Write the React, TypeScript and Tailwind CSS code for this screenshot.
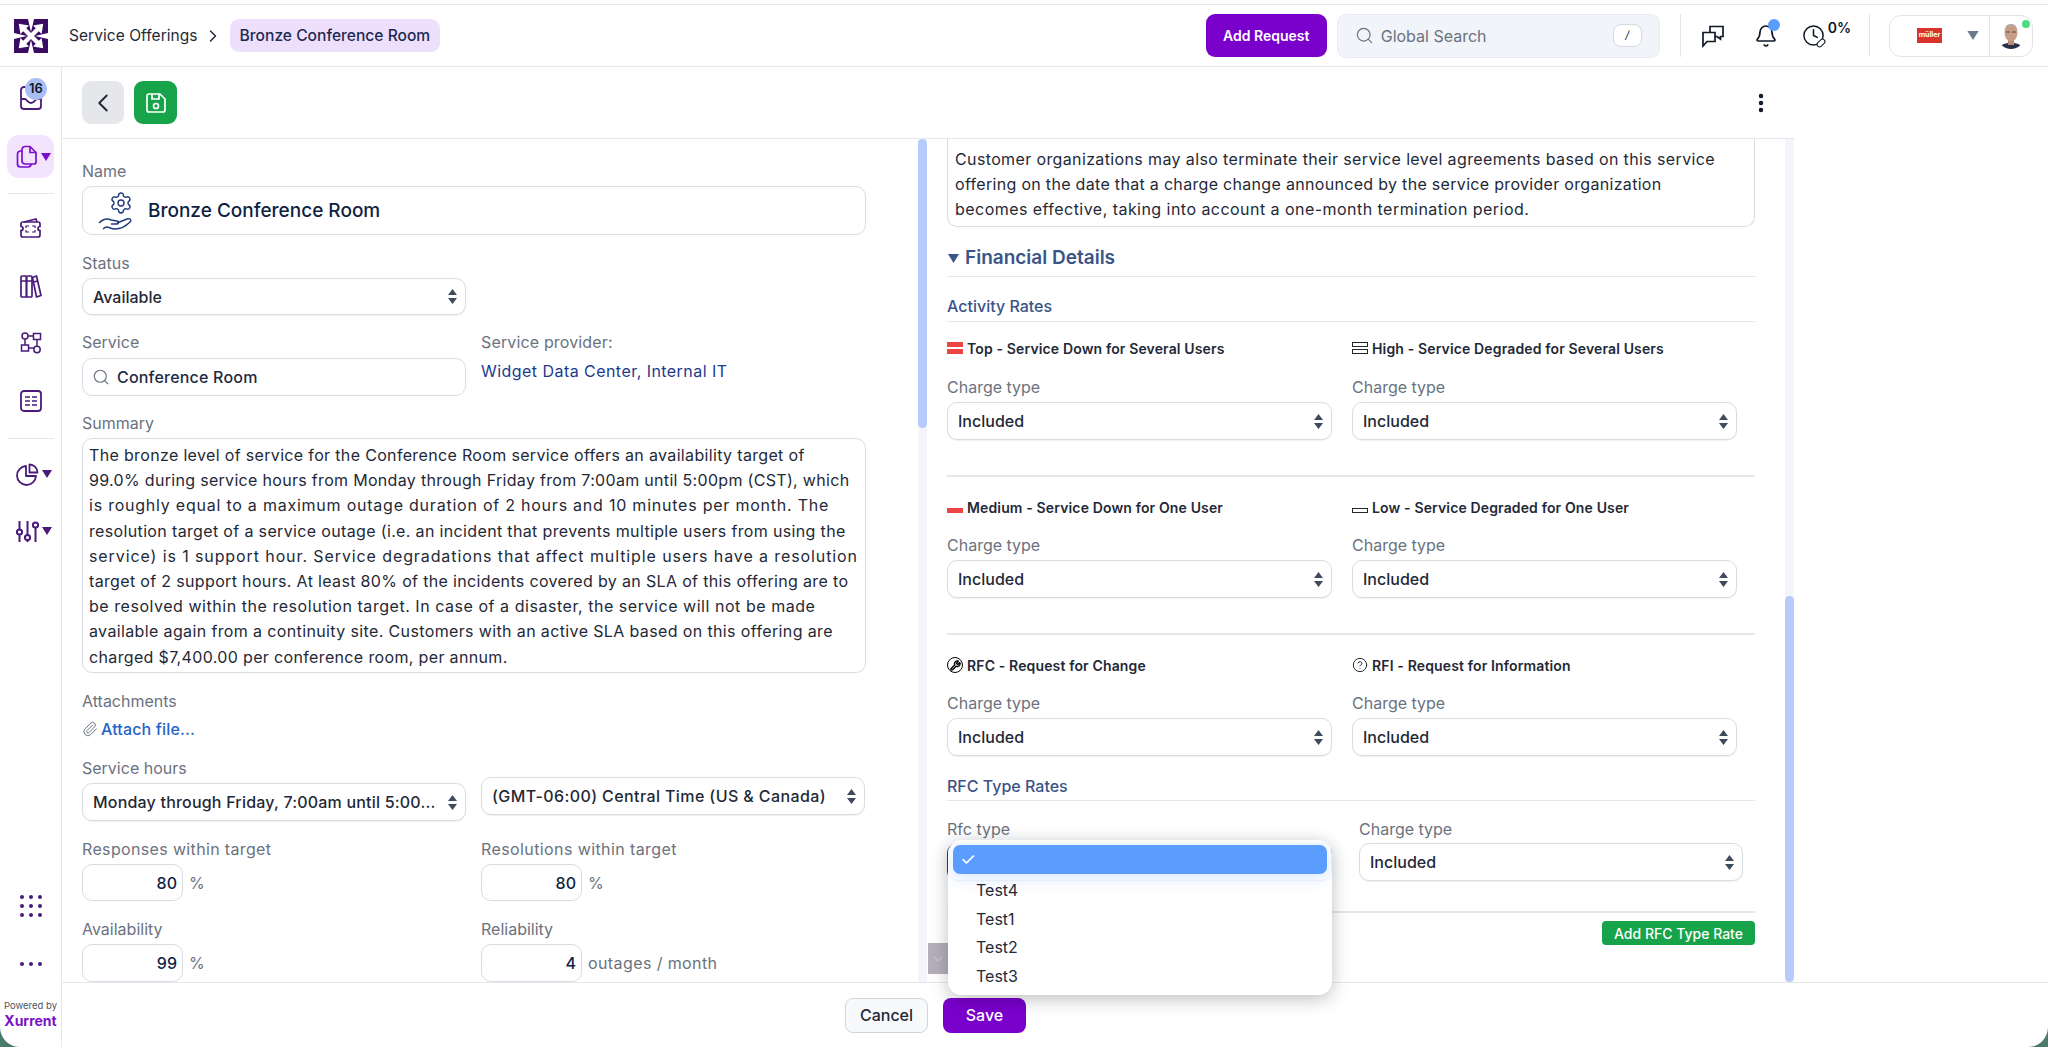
import type { ReactNode } from 'react'
import {
  Bell,
  ChevronDown,
  ChevronLeft,
  ChevronRight,
  CircleHelp,
  Clock,
  EllipsisVertical,
  Paperclip,
  Search,
  Settings,
  Wrench
} from 'lucide-react'

const purple = 'text-[#4a1a7a]'

function Logo(): React.JSX.Element {
  return (
    <svg width="34" height="34" viewBox="0 0 100 100" className="mx-[14px] shrink-0">
      <rect width="100" height="100" fill="#3a0c64" />
      <path fill="#fff" d="M41 0h18l-9 38zM41 100h18l-9-38zM0 41v18l38-9zM100 41v18l-38-9z" />
      <path stroke="#fff" strokeWidth="13" d="M28 28 72 72M72 28 28 72" />
      <path fill="#fff" d="M14 14l30 5-25 25zM86 14l-30 5 25 25zM14 86l30-5-25-25zM86 86l-30-5 25-25z" />
    </svg>
  )
}

function Caret({ className = '' }: { className?: string }): React.JSX.Element {
  return (
    <svg width="10" height="8" viewBox="0 0 10 8" className={className}>
      <path d="M0 0h10L5 8z" fill="currentColor" />
    </svg>
  )
}

function SideCell({ mt, children }: { mt: string; children: ReactNode }): React.JSX.Element {
  return <div className={`flex h-9 items-center justify-center ${mt} ${purple}`}>{children}</div>
}

function Sidebar(): React.JSX.Element {
  return (
    <aside className="flex w-[62px] shrink-0 flex-col border-r border-[#e5e7eb]">
      <div className="relative mt-2 flex h-11 items-center justify-center">
        <svg width="24" height="25" viewBox="0 0 24 25" fill="none" stroke="#4a1a7a" strokeWidth="1.8">
          <path d="M8 2H5a3 3 0 0 0-3 3v16a3 3 0 0 0 3 3h14a3 3 0 0 0 3-3V10" />
          <path d="M2 14h4c2 0 2 4 6 4s4-4 6-4h4" />
        </svg>
        <span className="absolute left-[25px] top-[3px] flex h-[22px] w-[22px] items-center justify-center rounded-full bg-[#a9bff3] text-[13px] font-semibold text-[#111827]">
          16
        </span>
      </div>
      <div className="mx-[7px] mt-4 flex h-[43px] items-center justify-center gap-[3px] rounded-[12px] bg-[#f3e3fd] pl-[6px] text-[#7a10c8]">
        <svg width="22" height="24" viewBox="0 0 22 24" fill="none" stroke="currentColor" strokeWidth="1.7">
          <path d="M9 1.500h5l6 6V17a2 2 0 0 1-2 2H9a3 3 0 0 1-3-3V4.500a3 3 0 0 1 3-3z" />
          <path d="M14 1.500V7.500h6" />
          <path d="M6 6H4.500a3 3 0 0 0-3 3v10a3 3 0 0 0 3 3H12a3 3 0 0 0 3-3" />
        </svg>
        <Caret />
      </div>
      <div className="mx-[7px] mt-[15px] h-px bg-[#e5e7eb]" />
      <SideCell mt="mt-4">
        <svg width="23" height="22" viewBox="0 0 23 22" fill="none" stroke="currentColor" strokeWidth="1.7">
          <path d="M4 5h15a2 2 0 0 1 2 2v2.500a2 2 0 0 0 0 4V18a2 2 0 0 1-2 2H4a2 2 0 0 1-2-2v-4.500a2 2 0 0 0 0-4V7a2 2 0 0 1 2-2z" />
          <path d="M5 5l12-3 1 3" />
          <path strokeWidth="1.2" d="M7 11V9h3M16 11V9h-3M7 13v2h3M16 13v2h-3" />
        </svg>
      </SideCell>
      <SideCell mt="mt-[22px]">
        <svg width="22" height="25" viewBox="0 0 22 25" fill="none" stroke="currentColor" strokeWidth="1.700" strokeLinejoin="round">
          <rect x="1" y="2" width="5.500" height="21" rx="1" />
          <rect x="6.500" y="2" width="5.500" height="21" rx="1" />
          <path d="M12.500 3.500 16.500 2 21 21.500l-4.500 1.500z" />
          <path d="M1 7h5.500M6.500 7H12M13.500 8l4-1" strokeWidth="1.300" />
        </svg>
      </SideCell>
      <SideCell mt="mt-[21px]">
        <svg width="22" height="22" viewBox="0 0 22 22" fill="none" stroke="currentColor" strokeWidth="1.500">
          <circle cx="5" cy="4" r="3" />
          <path d="M5 7v6M1.500 13h7v6h-7zM8.500 16H14M13.500 1.500h7v6h-7zM8 4h5.500M17 8v6" />
          <circle cx="17" cy="17.500" r="3.200" />
        </svg>
      </SideCell>
      <SideCell mt="mt-[22px]">
        <svg width="22" height="22" viewBox="0 0 22 22" fill="none" stroke="currentColor" strokeWidth="1.8">
          <rect x="1" y="1" width="20" height="20" rx="3" />
          <path d="M5 7h5M12 7h5M5 11h5M12 11h5M5 15h5M12 15h5" strokeWidth="1.500" />
        </svg>
      </SideCell>
      <div className="mx-[7px] mt-[19px] h-px bg-[#e5e7eb]" />
      <SideCell mt="mt-[17px]">
        <span className="flex items-center gap-[3px] pl-[6px]">
          <svg width="23" height="23" viewBox="0 0 23 23" fill="none" stroke="currentColor" strokeWidth="1.800" strokeLinejoin="round">
            <path d="M10 3a9.500 9.500 0 1 0 10 10H10z" />
            <path d="M13.500 1.500a8 8 0 0 1 8 8h-8z" />
          </svg>
          <Caret />
        </span>
      </SideCell>
      <SideCell mt="mt-[21px]">
        <span className="flex items-center gap-[3px] pl-[6px]">
          <svg width="23" height="23" viewBox="0 0 23 23" fill="none" stroke="currentColor" strokeWidth="2">
            <path d="M3.500 1v8M3.500 15v7M11.500 1v14M11.500 20v2M19.500 8v14" />
            <circle cx="3.500" cy="12" r="2.600" />
            <circle cx="11.500" cy="17.500" r="2.600" />
            <circle cx="19.500" cy="5" r="2.600" />
          </svg>
          <Caret />
        </span>
      </SideCell>
      <div className="flex-1" />
      <SideCell mt="">
        <span className="grid grid-cols-3 gap-x-[5px] gap-y-[5px]">
          {[0, 1, 2, 3, 4, 5, 6, 7, 8].map((i) => (
            <span key={i} className="h-[4px] w-[4px] rounded-full bg-[#4a1a7a]" />
          ))}
        </span>
      </SideCell>
      <SideCell mt="mt-[22px]">
        <span className="flex gap-[5px]">
          {[0, 1, 2].map((i) => (
            <span key={i} className="h-[4px] w-[4px] rounded-full bg-[#4a1a7a]" />
          ))}
        </span>
      </SideCell>
      <div className="mb-[17px] mt-[17px] flex flex-col items-center">
        <span className="text-[9.500px] leading-[13px] text-[#4b5563]">Powered by</span>
        <span className="text-[14px] font-bold leading-[18px] text-[#7a10c8]">Xurrent</span>
      </div>
    </aside>
  )
}

function Avatar(): React.JSX.Element {
  return (
    <svg width="26" height="28" viewBox="0 0 26 28" className="shrink-0">
      <clipPath id="face">
        <circle cx="13" cy="14" r="13" />
      </clipPath>
      <g clipPath="url(#face)">
        <rect width="26" height="28" fill="#fff" />
        <path d="M1 28c0-5 5-7 12-7s12 2 12 7z" fill="#27324a" />
        <rect x="10" y="16" width="6" height="7" fill="#b98a74" />
        <ellipse cx="13" cy="11" rx="6.500" ry="8.500" fill="#c79d88" />
        <path d="M6.500 9C7 3 10 2 13 2s6 1 6.500 7C18 5 16 4.500 13 4.500S8 5 6.500 9z" fill="#b7aaa3" />
        <path d="M8 10h4M14 10h4" stroke="#5b4a44" strokeWidth="1" />
      </g>
    </svg>
  )
}

function Header(): React.JSX.Element {
  return (
    <header className="flex h-[62px] shrink-0 items-center border-b border-[#e5e7eb]">
      <Logo />
      <span className="ml-[7px] text-[15.500px] tracking-[0.05px] text-[#1f2937]">Service Offerings</span>
      <ChevronRight size={20} strokeWidth={1.7} className="ml-[5px] text-[#1f2937]" />
      <span className="ml-[7px] flex h-[33px] items-center rounded-[9px] bg-[#eedffc] px-[10px] text-[15.600px] font-medium text-[#1e2a52]">
        Bronze Conference Room
      </span>
      <div className="flex-1" />
      <button className="h-[43px] w-[121px] rounded-[9px] bg-[#7a00cc] text-[14px] font-semibold text-white">
        Add Request
      </button>
      <div className="ml-[10px] flex h-[44px] w-[323px] items-center rounded-[9px] border border-[#e8ecf2] bg-[#f1f4f9] px-[17px]">
        <Search size={19} strokeWidth={1.5} className="text-[#6b7280]" />
        <span className="ml-[7px] flex-1 text-[16px] text-[#6b7280]">Global Search</span>
        <span className="flex h-[23px] w-[29px] items-center justify-center rounded-[8px] border border-[#d5d9e0] bg-white text-[11px] italic text-[#111827]">
          /
        </span>
      </div>
      <div className="ml-[20px] h-[43px] w-px bg-[#e5e7eb]" />
      <svg width="24" height="24" viewBox="0 0 24 24" fill="none" stroke="#111827" strokeWidth="1.7" className="ml-[20px]">
        <path d="M9 8V2.500h13v10h-2.500V15L16 12.500h-2" />
        <path d="M2 8.500h12v9H6L2 22z" />
      </svg>
      <div className="relative ml-[29px]">
        <Bell size={24} strokeWidth={1.7} className="text-[#111827]" />
        <span className="absolute -right-[2px] -top-[5px] h-[12px] w-[12px] rounded-full bg-[#5b9dff]" />
      </div>
      <div className="ml-[24px] flex items-start">
        <div className="relative">
          <Clock size={23} strokeWidth={1.6} className="text-[#111827]" />
          <span className="absolute -right-[1px] bottom-[1px] h-[6px] w-[10px] -rotate-45 rounded-full border border-[#111827] bg-white" />
        </div>
        <span className="ml-[3px] -mt-[7px] text-[14px] font-semibold text-[#111827]">0%</span>
      </div>
      <div className="ml-[18px] h-[43px] w-px bg-[#e5e7eb]" />
      <div className="ml-[19px] mr-[15px] flex h-[42px] w-[144px] items-center rounded-[12px] border border-[#dfe3e8]">
        <span className="ml-[27px] flex h-[15px] w-[25px] items-center justify-center bg-[#d9342b] text-[7px] font-bold text-white">
          müller
        </span>
        <Caret className="ml-[25px] h-[9px] w-[12px] text-[#6b7a8d]" />
        <div className="relative ml-[10px] flex h-full flex-1 items-center justify-center border-l border-[#dfe3e8]">
          <Avatar />
          <span className="absolute right-[2px] top-[4px] h-[8px] w-[8px] rounded-full bg-[#4ade80]" />
        </div>
      </div>
    </header>
  )
}

function Label({ children, className = '' }: { children: ReactNode; className?: string }): React.JSX.Element {
  return <div className={`text-[16px] leading-6 text-[#6b7280] ${className}`}>{children}</div>
}

function Arrows(): React.JSX.Element {
  return (
    <svg width="9" height="15" viewBox="0 0 9 15" className="shrink-0 text-[#3f4a5c]">
      <path d="M4.500 0 9 6H0zM0 9h9l-4.500 6z" fill="currentColor" />
    </svg>
  )
}

function Select({
  value,
  className = 'h-[38px]',
  textClass = ''
}: {
  value: string
  className?: string
  textClass?: string
}): React.JSX.Element {
  return (
    <div className={`flex items-center justify-between rounded-[10px] border border-[#d8dde5] bg-white pl-[10px] pr-[8px] shadow-[0_1px_1px_rgba(0,0,0,0.06)] ${className}`}>
      <span className={`truncate text-[16px] font-medium text-[#1f2937] ${textClass}`}>{value}</span>
      <Arrows />
    </div>
  )
}

function NumberInput({
  value,
  unit,
  className = 'mt-[3px] h-[37px]'
}: {
  value: string
  unit: string
  className?: string
}): React.JSX.Element {
  return (
    <div className={`flex items-center ${className}`}>
      <div className="flex h-full w-[101px] items-center justify-end rounded-[10px] border border-[#d8dde5] pr-[5px] text-[16px] font-medium text-[#0f1f44]">
        {value}
      </div>
      <span className="ml-[6px] text-[16px] tracking-[0.4px] text-[#6b7280]">{unit}</span>
    </div>
  )
}

// the reference breaks these texts at fixed points, so they are kept line by line
const summaryLines = [
  { text: 'The bronze level of service for the Conference Room service offers an availability target of', fit: 'tracking-[0.34px]' },
  { text: '99.0% during service hours from Monday through Friday from 7:00am until 5:00pm (CST), which', fit: 'tracking-[0.31px]' },
  { text: 'is roughly equal to a maximum outage duration of 2 hours and 10 minutes per month. The', fit: 'tracking-[0.77px]' },
  { text: 'resolution target of a service outage (i.e. an incident that prevents multiple users from using the', fit: 'tracking-[0.35px]' },
  { text: 'service) is 1 support hour. Service degradations that affect multiple users have a resolution', fit: 'tracking-[0.9px]' },
  { text: 'target of 2 support hours. At least 80% of the incidents covered by an SLA of this offering are to', fit: 'tracking-[0.34px]' },
  { text: 'be resolved within the resolution target. In case of a disaster, the service will not be made', fit: 'tracking-[0.54px]' },
  { text: 'available again from a continuity site. Customers with an active SLA based on this offering are', fit: 'tracking-[0.37px]' },
  { text: 'charged $7,400.00 per conference room, per annum.', fit: 'tracking-[0.35px]' }
]

const termsLines = [
  { text: 'Customer organizations may also terminate their service level agreements based on this service', fit: 'tracking-[0.37px]' },
  { text: 'offering on the date that a charge change announced by the service provider organization', fit: 'tracking-[0.31px]' },
  { text: 'becomes effective, taking into account a one-month termination period.', fit: 'tracking-[0.46px]' }
]

function TextLines({ lines }: { lines: { text: string; fit: string }[] }): React.JSX.Element {
  return (
    <>
      {lines.map((line) => (
        <div key={line.text} className={`whitespace-nowrap ${line.fit}`}>
          {line.text}
        </div>
      ))}
    </>
  )
}

function LeftForm(): React.JSX.Element {
  return (
    <div className="h-full w-[856px] shrink-0 overflow-hidden pl-5 pr-[52px] pt-5">
      <Label>Name</Label>
      <div className="mt-[3px] flex h-[49px] items-center rounded-[10px] border border-[#d8dde5] pl-[15px]">
        <div className="flex w-[38px] flex-col items-center text-[#1e3a7a]">
          <Settings size={24} strokeWidth={1.4} className="ml-[8px]" />
          <svg width="38" height="17" viewBox="0 0 38 17" fill="none" stroke="currentColor" strokeWidth="1.4" className="-mt-[2px]">
            <path d="M1 10c4-4 8-5 12-3l6 1c2 0 2 3 0 3h-6M19 10l10-4c3-1 5 1 3 3-4 4-9 7-15 7-4 0-6-2-8-2s-3 1-4 2" />
          </svg>
        </div>
        <span className="ml-[12px] mt-[1px] text-[19px] font-medium text-[#0f1f44]">Bronze Conference Room</span>
      </div>
      <Label className="mt-4">Status</Label>
      <Select value="Available" className="mt-[3px] h-[37px] w-[384px]" />
      <div className="mt-[15px] grid grid-cols-[399px_1fr]">
        <div>
          <Label>Service</Label>
          <div className="mt-1 flex h-[38px] w-[384px] items-center rounded-[10px] border border-[#d8dde5] pl-[9px]">
            <Search size={18} strokeWidth={1.5} className="text-[#6b7280]" />
            <span className="ml-[7px] text-[16px] font-medium tracking-[0.2px] text-[#1e2a44]">Conference Room</span>
          </div>
        </div>
        <div>
          <Label className="tracking-[0.15px]">Service provider:</Label>
          <div className="mt-[5px] text-[16px] leading-6 tracking-[0.45px] text-[#1e3a8a]">Widget Data Center, Internal IT</div>
        </div>
      </div>
      <Label className="mt-[15px]">Summary</Label>
      <div className="mt-[3px] h-[235px] rounded-[10px] border border-[#d8dde5] px-[6px] pb-[2px] pt-[4px] text-[16px] leading-[25.200px] text-[#1f2937]">
        <TextLines lines={summaryLines} />
      </div>
      <Label className="mt-4">Attachments</Label>
      <div className="mt-1 flex items-center text-[16px] font-medium leading-6 tracking-[0.15px] text-[#2563c9]">
        <Paperclip size={16} strokeWidth={1.5} className="mr-[3px] text-[#6b7280]" />
        Attach file...
      </div>
      <div className="mt-[15px] grid grid-cols-[399px_1fr]">
        <div>
          <Label>Service hours</Label>
          <Select
            value="Monday through Friday, 7:00am until 5:00..."
            className="mt-[3px] h-[38px] w-[384px]"
            textClass="tracking-[0.2px]"
          />
        </div>
        <Select
          value="(GMT-06:00) Central Time (US & Canada)"
          className="mt-[21px] h-[38px] w-[384px]"
          textClass="tracking-[0.4px]"
        />
      </div>
      <div className="mt-4 grid grid-cols-[399px_1fr]">
        <div>
          <Label className="tracking-[0.35px]">Responses within target</Label>
          <NumberInput value="80" unit="%" />
        </div>
        <div>
          <Label className="tracking-[0.4px]">Resolutions within target</Label>
          <NumberInput value="80" unit="%" />
        </div>
      </div>
      <div className="mt-4 grid grid-cols-[399px_1fr]">
        <div>
          <Label>Availability</Label>
          <NumberInput value="99" unit="%" className="mt-[3px] h-[38px]" />
        </div>
        <div>
          <Label>Reliability</Label>
          <NumberInput value="4" unit="outages / month" className="mt-[3px] h-[38px]" />
        </div>
      </div>
    </div>
  )
}

function Bars({ kind }: { kind: 'top' | 'high' | 'medium' | 'low' }): React.JSX.Element {
  if (kind === 'top') {
    return (
      <span className="flex w-4 flex-col gap-[2px]">
        <span className="h-[5px] bg-[#ef4444]" />
        <span className="h-[5px] bg-[#ef4444]" />
      </span>
    )
  }
  if (kind === 'high') {
    return (
      <span className="flex w-4 flex-col gap-[2px]">
        <span className="h-[5px] border border-[#27272a]" />
        <span className="h-[5px] border border-[#27272a]" />
      </span>
    )
  }
  return (
    <span className="flex h-3 w-4 flex-col justify-end">
      <span className={kind === 'medium' ? 'h-[5px] bg-[#ef4444]' : 'h-[5px] border border-[#27272a]'} />
    </span>
  )
}

function RateField({
  icon,
  title,
  labelMt = 'mt-4'
}: {
  icon: ReactNode
  title: string
  labelMt?: string
}): React.JSX.Element {
  return (
    <div>
      <div className="flex h-5 items-center gap-[4px] text-[14px] font-semibold tracking-[0.14px] text-[#1f2937]">
        {icon}
        <span>{title}</span>
      </div>
      <Label className={labelMt}>Charge type</Label>
      <Select value="Included" className="mt-[3px] h-[38px]" />
    </div>
  )
}

function RightForm(): React.JSX.Element {
  return (
    <div className="h-full w-[858px] shrink-0 overflow-hidden pl-5 pr-[30px]">
      <div className="h-[88px] rounded-b-[10px] border-x border-b border-[#d8dde5] px-[7px] pt-2 text-[16px] leading-[25px] text-[#1f2937]">
        <TextLines lines={termsLines} />
      </div>
      <div className="mt-[17px] flex items-center border-b border-[#e5e7eb] pb-1 text-[19px] font-semibold leading-7 text-[#3b5488]">
        <Caret className="ml-[1px] mr-[6px] h-[9px] w-[11px]" />
        Financial Details
      </div>
      <div className="mt-[17px] border-b border-[#e5e7eb] pb-[3px] text-[16px] font-medium leading-6 text-[#3b5488]">
        Activity Rates
      </div>
      <div className="mt-4 grid grid-cols-[385px_385px] gap-x-5">
        <RateField labelMt="mt-[17px]" icon={<Bars kind="top" />} title="Top - Service Down for Several Users" />
        <RateField labelMt="mt-[17px]" icon={<Bars kind="high" />} title="High - Service Degraded for Several Users" />
      </div>
      <div className="mb-5 mt-[35px] h-[2px] bg-[#e5e7eb]" />
      <div className="grid grid-cols-[385px_385px] gap-x-5">
        <RateField icon={<Bars kind="medium" />} title="Medium - Service Down for One User" />
        <RateField icon={<Bars kind="low" />} title="Low - Service Degraded for One User" />
      </div>
      <div className="mb-5 mt-[35px] h-[2px] bg-[#e5e7eb]" />
      <div className="grid grid-cols-[385px_385px] gap-x-5">
        <RateField
          icon={
            <span className="flex h-4 w-4 items-center justify-center rounded-full border-[1.500px] border-black">
              <Wrench size={11} strokeWidth={3} className="text-black" />
            </span>
          }
          title="RFC - Request for Change"
        />
        <RateField icon={<CircleHelp size={16} strokeWidth={1.5} />} title="RFI - Request for Information" />
      </div>
      <div className="mt-[18px] border-b border-[#e5e7eb] pb-[2px] text-[16px] font-medium leading-6 text-[#3b5488]">
        RFC Type Rates
      </div>
      <div className="mt-4 grid grid-cols-[385px_384px] gap-x-[27px]">
        <div>
          <Label>Rfc type</Label>
          <div className="mt-[2px] h-[38px] rounded-[10px] border border-[#1e3a8a]" />
        </div>
        <div>
          <Label>Charge type</Label>
          <Select value="Included" className="mt-[2px] h-[38px]" />
        </div>
      </div>
      <div className="mt-[30px] h-[2px] bg-[#e5e7eb]" />
      <div className="mt-2 flex justify-end">
        <button className="h-6 w-[153px] rounded-[4px] bg-[#16a34a] text-[14px] font-medium text-white">
          Add RFC Type Rate
        </button>
      </div>
    </div>
  )
}

function Scrollbar({ top, height }: { top: number; height: number }): React.JSX.Element {
  return (
    <div className="h-full w-[9px] shrink-0 bg-[#f3f5fa]">
      <div style={{ marginTop: top, height }} className="rounded-full bg-[#b7cbfb]" />
    </div>
  )
}

function RfcDropdown(): React.JSX.Element {
  return (
    <div className="absolute left-[886px] top-[701px] z-10 h-[155px] w-[384px] rounded-[14px] bg-white/95 p-[5px] shadow-[0_4px_18px_rgba(0,0,0,0.25)]">
      <div className="flex h-[29px] items-center rounded-[7px] bg-[#5b9dff] pl-[7px] text-[18px] text-white shadow-[0_4px_16px_rgba(91,157,255,0.25)]">
        ✓
      </div>
      <div className="mt-[2px] flex flex-col pl-[23px] text-[16px] leading-[28.700px] text-[#1f2937]">
        <span>Test4</span>
        <span>Test1</span>
        <span>Test2</span>
        <span>Test3</span>
      </div>
    </div>
  )
}

export default function App(): React.JSX.Element {
  return (
    <div className="h-[1047px] w-[2048px] overflow-hidden bg-[#4b7a68] font-['Inter',sans-serif]">
      <div className="flex h-full flex-col overflow-hidden rounded-b-[20px] bg-white">
        <div className="h-[5px] shrink-0 border-b border-[#e5e7eb]" />
        <Header />
        <div className="flex min-h-0 flex-1">
          <Sidebar />
          <div className="flex min-w-0 flex-1 flex-col">
            <div className="relative w-[1732px]">
              <div className="flex h-[72px] items-center justify-between border-b border-[#e5e7eb] pl-5 pr-[21px]">
                <div className="flex gap-[10px]">
                  <button className="flex h-[43px] w-[42px] items-center justify-center rounded-[9px] bg-[#e5e7eb]">
                    <ChevronLeft size={30} strokeWidth={1.5} className="text-[#1f2937]" />
                  </button>
                  <button className="flex h-[43px] w-[43px] items-center justify-center rounded-[9px] bg-[#16a34a]">
                    <svg width="24" height="24" viewBox="0 0 24 24" fill="none" stroke="#fff" strokeWidth="1.700">
                      <path d="M5 3h11l5 5v11a2 2 0 0 1-2 2H5a2 2 0 0 1-2-2V5a2 2 0 0 1 2-2z" />
                      <path d="M8 3v5h7V3" />
                      <circle cx="12" cy="15" r="2.500" />
                    </svg>
                  </button>
                </div>
                <EllipsisVertical size={24} strokeWidth={2.5} className="text-[#111827]" />
              </div>
              <div className="relative flex h-[843px]">
                <LeftForm />
                <Scrollbar top={0} height={289} />
                <RightForm />
                <Scrollbar top={457} height={386} />
                <div className="absolute left-[866px] top-[804px] flex h-[31px] w-5 items-center justify-center bg-[#b4afbb]">
                  <ChevronDown size={16} className="text-[#c8c4ce]" />
                </div>
                <RfcDropdown />
              </div>
            </div>
            <div className="flex flex-1 items-center border-t border-[#e5e7eb]">
              <div className="flex w-[1732px] justify-center gap-[15px] pl-[15px]">
                <button className="h-[35px] w-[83px] rounded-[8px] border border-[#d1d5db] bg-[#f8f9fa] text-[16px] font-medium text-[#1f2937]">
                  Cancel
                </button>
                <button className="h-[35px] w-[83px] rounded-[8px] bg-[#7a00cc] text-[16px] font-medium text-white">
                  Save
                </button>
              </div>
            </div>
          </div>
        </div>
      </div>
    </div>
  )
}
